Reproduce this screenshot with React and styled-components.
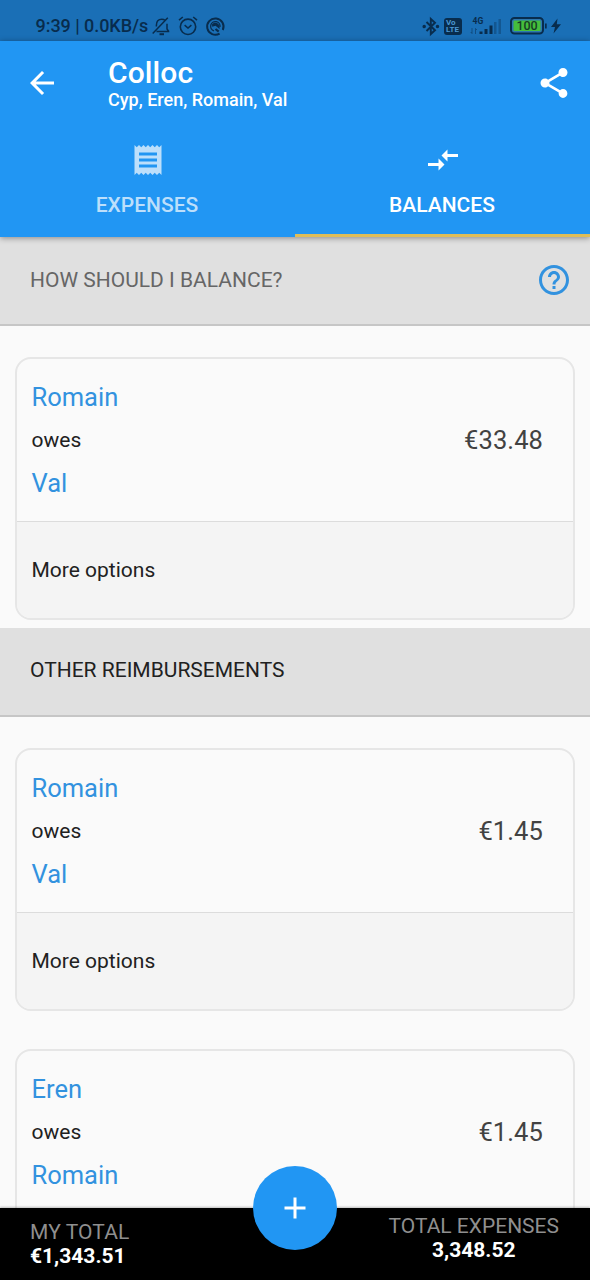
import React from 'react';
import styled, { createGlobalStyle } from 'styled-components';

const GlobalStyle = createGlobalStyle`
  *, *::before, *::after { box-sizing: border-box; }
  body { margin: 0; background: #fafafa; font-family: Roboto, "Liberation Sans", sans-serif; }
`;

const Screen = styled.div`
  position: relative;
  display: flex;
  flex-direction: column;
  width: 590px;
  height: 1280px;
  overflow: hidden;
  background: #fafafa;
`;

const Text = styled.span`
  display: block;
  white-space: nowrap;
  font-size: ${(p) => p.$size || 21}px;
  line-height: ${(p) => p.$line || 24}px;
  font-weight: ${(p) => p.$weight || 400};
  letter-spacing: ${(p) => p.$spacing || 0}px;
  color: ${(p) => p.$color || '#212121'};
`;

const StatusBar = styled.div`
  display: flex;
  justify-content: space-between;
  flex: none;
  height: 41px;
  padding: 14px 29px 0 35.5px;
  background: #1a6fb6;
  color: #082c4d;
`;

const StatusGroup = styled.div`
  display: flex;
  align-items: center;
  height: 24px;
`;

const StatusIcon = styled.svg`
  display: block;
  flex: none;
  overflow: visible;
  margin-left: ${(p) => p.$gap || 0}px;
`;

const TopBar = styled.header`
  position: relative;
  z-index: 1;
  flex: none;
  height: 196px;
  background: #2196f3;
  box-shadow: 0 1px 6px rgba(0, 0, 0, 0.4);
`;

const TitleRow = styled.div`
  display: flex;
  align-items: center;
  height: 84px;
  padding: 0 18px 0 24px;
`;

const TitleBlock = styled.div`
  flex: 1;
  padding: 2px 0 0 48px;
`;

const Icon = styled.svg`
  display: block;
  flex: none;
  width: 36px;
  height: 36px;
  fill: ${(p) => p.$color || '#ffffff'};
`;

const Tabs = styled.nav`
  display: flex;
  height: 112px;
`;

const Tab = styled.div`
  flex: 1;
  display: flex;
  flex-direction: column;
  align-items: center;
  gap: 15px;
  padding-top: 17px;
  border-bottom: 3px solid ${(p) => (p.$active ? '#dfbd58' : 'transparent')};
`;

const TabLabel = styled(Text)`
  padding-right: 1px;
`;

const Content = styled.main`
  flex: 1;
  min-height: 0;
  overflow: hidden;
`;

const SectionHeader = styled.div`
  display: flex;
  align-items: center;
  justify-content: space-between;
  height: 89px;
  padding: ${(p) => (p.$lower ? '0 18px 4px 30px' : '0 18px 1px 30px')};
  background: #e0e0e0;
  border-bottom: 2px solid #c6c6c6;
`;

const CardSlot = styled.div`
  padding: 31px 15px 8px;
`;

const Card = styled.article`
  height: 263px;
  margin-bottom: -1px;
  border: 2px solid #e6e6e6;
  border-radius: 16px;
  overflow: hidden;
`;

const CardBody = styled.div`
  display: flex;
  align-items: center;
  justify-content: space-between;
  height: 163px;
  padding: 0 30px 0 14.5px;
  border-bottom: 1px solid #dcdcdc;
`;

const Parties = styled.div`
  display: flex;
  flex-direction: column;
  gap: 16px;
`;

const CardAction = styled.div`
  display: flex;
  align-items: center;
  height: 97px;
  padding: 0 0 1px 14.5px;
  background: #f4f4f4;
`;

const CardGap = styled.div`
  height: 1px;
`;

const BottomBar = styled.footer`
  position: relative;
  display: flex;
  justify-content: space-between;
  flex: none;
  height: 72px;
  padding: 0 31px 0 30px;
  background: #000000;
  box-shadow: 0 -1px 2px rgba(0, 0, 0, 0.25);
`;

const Total = styled.div`
  display: flex;
  flex-direction: column;
  align-items: ${(p) => (p.$centered ? 'center' : 'flex-start')};
  padding-top: ${(p) => (p.$centered ? 6 : 12)}px;
`;

const AddButton = styled.button`
  position: absolute;
  left: 253px;
  top: -42px;
  display: flex;
  align-items: center;
  justify-content: center;
  width: 84px;
  height: 84px;
  padding: 0;
  border: 0;
  border-radius: 50%;
  background: #2196f3;
`;

const VolteBadge = styled.div`
  display: flex;
  flex-direction: column;
  justify-content: center;
  width: 18px;
  height: 17px;
  margin: 0 1px 0 5px;
  padding-left: 2px;
  border-radius: 3px;
  background: currentColor;
`;

function StatusIconsLeft() {
  return (
    <>
      <StatusIcon $gap={4} width="18" height="19" viewBox="0 0 18 19" fill="none" stroke="currentColor" strokeWidth="1.5">
        <path d="M4.5 14.5h12.8M15 6.8v5.2l1.8 2.5M4.4 9.5V8.2C4.4 4.5 6.6 2.2 9.8 2.2c1.4 0 2.4.4 3.2 1.1M.7 16.5 15.8.8" />
        <path d="M7.5 17.2h4.5" strokeWidth="2" />
      </StatusIcon>
      <StatusIcon $gap={8} width="20" height="20" viewBox="0 0 20 20" fill="none" stroke="currentColor" strokeWidth="1.6">
        <circle cx="10" cy="10.8" r="7.7" />
        <path d="M1 4.2 4.8 1M19 4.2 15.2 1M6.6 9.2 10 12l3.4-2.8" />
      </StatusIcon>
      <StatusIcon $gap={8} width="19" height="19" viewBox="0 0 19 19" fill="none" stroke="currentColor">
        <path d="M13.6 16.6A8.2 8.2 0 1 1 16.8 13" strokeWidth="2" />
        <path d="M8 13.8A4.7 4.7 0 1 1 14 10" strokeWidth="1.3" />
        <path d="M6 7.5C7.5 4.8 12 5 13.5 8.6L13.6 12 9.5 8.8 6.2 9.8Z" fill="currentColor" stroke="none" />
        <path d="m9.5 12 3.2 2.6" strokeWidth="2.2" />
      </StatusIcon>
    </>
  );
}

function StatusIconsRight() {
  return (
    <>
      <StatusIcon width="16" height="19" viewBox="0 0 16 19" fill="none" stroke="currentColor" strokeWidth="1.9">
        <path d="m3.5 5 8.5 8.2L7.8 17V2L12 5.8 3.5 14" />
        <circle cx="1.2" cy="9.5" r=".8" fill="currentColor" />
        <circle cx="14.5" cy="9.5" r=".8" fill="currentColor" />
      </StatusIcon>
      <VolteBadge>
        <Text $size={8} $line={7.5} $weight={700} $color="#4a98d4">Vo</Text>
        <Text $size={8} $line={7.5} $weight={700} $color="#4a98d4">LTE</Text>
      </VolteBadge>
      <StatusIcon $gap={7} width="32" height="20" viewBox="0 0 32 20" fill="currentColor">
        <text x="2.5" y="7.5" fontSize="8.5" fontWeight="700">4G</text>
        <path d="M2 12v5.5L.7 16M5.5 18v-5.5L7 14" fill="none" stroke="currentColor" opacity=".5" />
        <path d="M9.5 15.5h3V18h-3zM14.5 13h3v5h-3zM19.5 9.5h3V18h-3z" />
        <path d="M24 6h2.5v12H24zM28.5 3H31v15h-2.5z" opacity=".35" />
      </StatusIcon>
      <StatusIcon $gap={8} width="37" height="18" viewBox="0 0 37 18">
        <rect x="1" y="1" width="32" height="15.5" rx="3.5" fill="#2d77ae" stroke="currentColor" strokeWidth="2" />
        <rect x="3.5" y="3.5" width="27" height="10.5" rx="1" fill="#45be3c" />
        <path d="M35 6.5h1.7v5H35z" fill="currentColor" />
        <text x="6.5" y="13.1" fontSize="12.5" fontWeight="500" fill="#153c25" textLength="21">100</text>
      </StatusIcon>
      <StatusIcon $gap={4} width="10" height="16" viewBox="0 0 10 16" fill="currentColor">
        <path d="M6.5.5 0 9h4L2.5 15.5 10 6.3H5.8z" />
      </StatusIcon>
    </>
  );
}

function DebtCard({ from, to, amount, action }) {
  return (
    <CardSlot>
      <Card>
        <CardBody>
          <Parties>
            <Text $size={25.5} $line={30} $color="#3292df">{from}</Text>
            <Text $line={24}>owes</Text>
            <Text $size={25.5} $line={30} $color="#3292df">{to}</Text>
          </Parties>
          <Text $size={25.5} $line={30} $color="#424242" $spacing={0.1}>{amount}</Text>
        </CardBody>
        {action && (
          <CardAction>
            <Text>{action}</Text>
          </CardAction>
        )}
      </Card>
    </CardSlot>
  );
}

export default function App() {
  return (
    <>
      <GlobalStyle />
      <Screen>
        <StatusBar>
          <StatusGroup>
            <Text $size={18} $weight={500} $color="#082c4d" $spacing={-0.05}>9:39 | 0.0KB/s</Text>
            <StatusIconsLeft />
          </StatusGroup>
          <StatusGroup>
            <StatusIconsRight />
          </StatusGroup>
        </StatusBar>
        <TopBar>
          <TitleRow>
            <Icon viewBox="0 0 24 24"><path d="M20 11H7.83l5.59-5.59L12 4l-8 8 8 8 1.41-1.41L7.83 13H20v-2z" /></Icon>
            <TitleBlock>
              <Text $size={30} $line={32} $weight={500} $color="#fff" $spacing={0.1}>Colloc</Text>
              <Text $size={18} $line={22} $weight={500} $color="#fff">Cyp, Eren, Romain, Val</Text>
            </TitleBlock>
            <Icon viewBox="0 0 24 24"><path d="M18 16.08c-.76 0-1.44.3-1.96.77L8.91 12.7c.05-.23.09-.46.09-.7s-.04-.47-.09-.7l7.05-4.11c.54.5 1.25.81 2.04.81 1.66 0 3-1.34 3-3s-1.34-3-3-3-3 1.34-3 3c0 .24.04.47.09.7L8.04 9.81C7.5 9.31 6.79 9 6 9c-1.66 0-3 1.34-3 3s1.34 3 3 3c.79 0 1.5-.31 2.04-.81l7.12 4.16c-.05.21-.08.43-.08.65 0 1.61 1.31 2.92 2.92 2.92s2.92-1.31 2.92-2.92-1.31-2.92-2.92-2.92z" /></Icon>
          </TitleRow>
          <Tabs>
            <Tab>
              <Icon $color="#bcdffb" viewBox="0 0 24 24"><path d="M18 17H6v-2h12v2zm0-4H6v-2h12v2zm0-4H6V7h12v2zM3 22l1.5-1.5L6 22l1.5-1.5L9 22l1.5-1.5L12 22l1.5-1.5L15 22l1.5-1.5L18 22l1.5-1.5L21 22V2l-1.5 1.5L18 2l-1.5 1.5L15 2l-1.5 1.5L12 2l-1.5 1.5L9 2 7.5 3.5 6 2 4.5 3.5 3 2v20z" /></Icon>
              <TabLabel $weight={500} $color="#bcdffb">EXPENSES</TabLabel>
            </Tab>
            <Tab $active>
              <Icon viewBox="0 0 24 24"><path d="M9.01 14H2v2h7.01v3L13 15l-3.99-4v3zm5.98-1v-3H22V8h-7.01V5L11 9l3.99 4z" /></Icon>
              <TabLabel $weight={500} $color="#fff">BALANCES</TabLabel>
            </Tab>
          </Tabs>
        </TopBar>
        <Content>
          <SectionHeader>
            <Text $color="#666">HOW SHOULD I BALANCE?</Text>
            <Icon $color="#3292df" viewBox="0 0 24 24"><path d="M11 18h2v-2h-2v2zm1-16C6.48 2 2 6.48 2 12s4.48 10 10 10 10-4.48 10-10S17.52 2 12 2zm0 18c-4.41 0-8-3.59-8-8s3.59-8 8-8 8 3.59 8 8-3.59 8-8 8zm0-14c-2.21 0-4 1.79-4 4h2c0-1.1.9-2 2-2s2 .9 2 2c0 2-3 1.75-3 5h2c0-2.25 3-2.5 3-5 0-2.21-1.79-4-4-4z" /></Icon>
          </SectionHeader>
          <DebtCard from="Romain" to="Val" amount="€33.48" action="More options" />
          <CardGap />
          <SectionHeader $lower>
            <Text>OTHER REIMBURSEMENTS</Text>
          </SectionHeader>
          <DebtCard from="Romain" to="Val" amount="€1.45" action="More options" />
          <DebtCard from="Eren" to="Romain" amount="€1.45" />
        </Content>
        <BottomBar>
          <Total>
            <Text $color="#8f8f8f" $spacing={0.1}>MY TOTAL</Text>
            <Text $weight={700} $color="#fff">€1,343.51</Text>
          </Total>
          <Total $centered>
            <Text $color="#8f8f8f">TOTAL EXPENSES</Text>
            <Text $weight={700} $color="#fff">3,348.52</Text>
          </Total>
          <AddButton aria-label="Add expense">
            <Icon viewBox="0 0 24 24"><path d="M19 13h-6v6h-2v-6H5v-2h6V5h2v6h6v2z" /></Icon>
          </AddButton>
        </BottomBar>
      </Screen>
    </>
  );
}
